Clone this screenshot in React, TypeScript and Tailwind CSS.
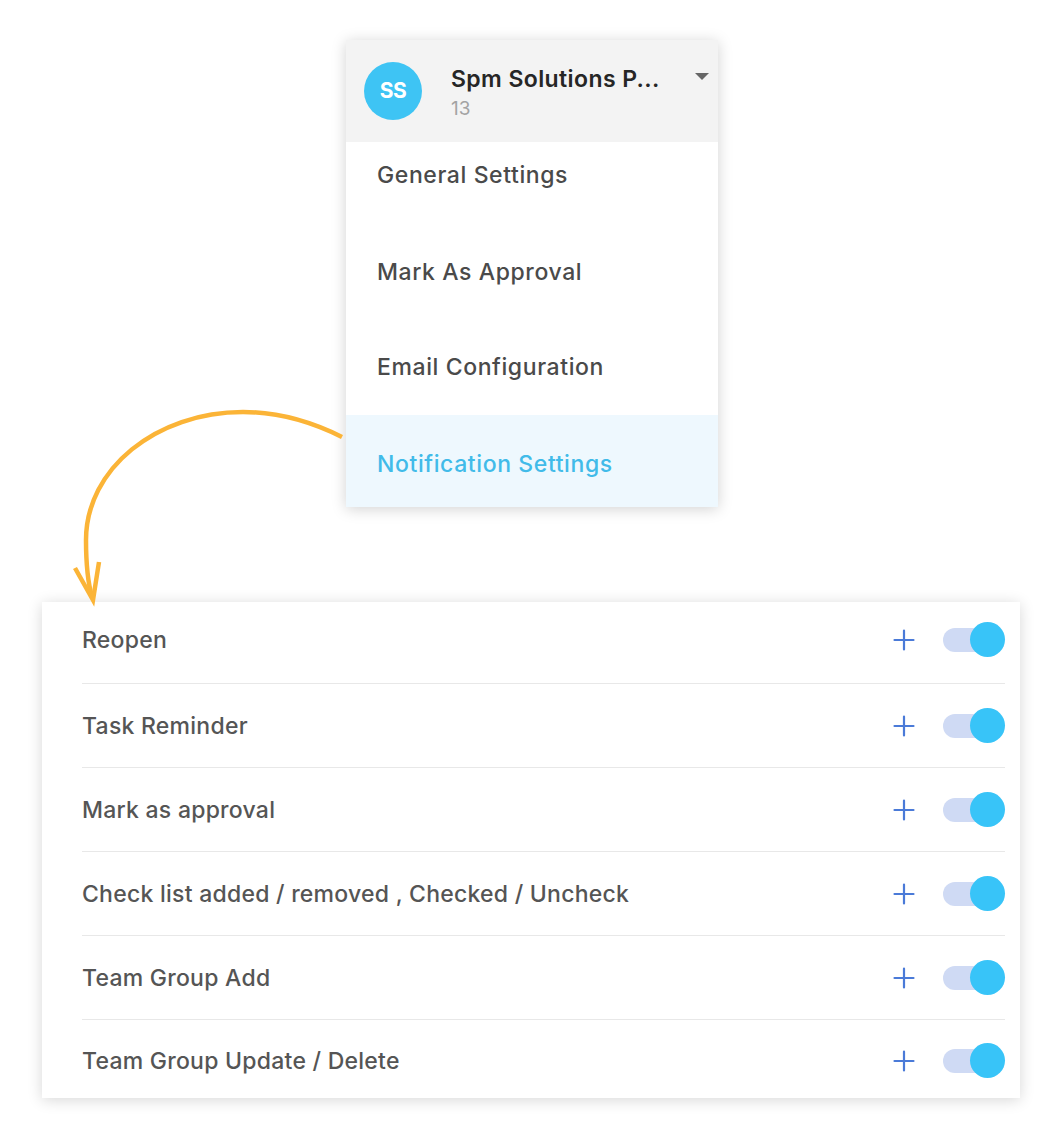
import React from "react";

const rows = [
  "Reopen",
  "Task Reminder",
  "Mark as approval",
  "Check list added / removed , Checked / Uncheck",
  "Team Group Add",
  "Team Group Update / Delete",
];

function PlusIcon() {
  return (
    <svg width="22" height="22" viewBox="0 0 22 22" fill="none">
      <path d="M11 1.5V20.5M1.5 11H20.5" stroke="#4a7ad8" strokeWidth="2.2" strokeLinecap="round" />
    </svg>
  );
}

function Toggle() {
  return (
    <div className="relative w-[62px] h-[36px] flex items-center">
      <div className="w-[48px] h-[24px] rounded-full bg-[#cfdaf4]" />
      <div className="absolute right-0 top-0 w-[35px] h-[35px] rounded-full bg-[#38c4f8]" />
    </div>
  );
}

export default function App() {
  return (
    <div
      className="relative w-[1060px] h-[1138px] bg-white overflow-hidden"
      style={{ fontFamily: "Inter, 'Noto Sans', sans-serif" }}
    >
      {/* Dropdown card */}
      <div className="ml-[346px] mt-[40px] w-[372px] bg-white shadow-[0_2px_14px_rgba(0,0,0,0.18)]">
        <div className="h-[102px] bg-[#f3f3f3] flex items-center pl-[18px] pr-[8px]">
          <div className="w-[58px] h-[58px] rounded-full bg-[#3ec4f4] flex items-center justify-center text-white text-[21px] font-bold tracking-tight">
            SS
          </div>
          <div className="ml-[29px] flex-1 flex flex-col mt-[4px]">
            <div className="text-[23px] font-semibold text-[#262626] leading-[28px] tracking-[0.4px]">
              Spm Solutions P...
            </div>
            <div className="text-[19px] text-[#a3a3a3] leading-[26px] mt-[3px]">13</div>
          </div>
          <svg width="16" height="9" viewBox="0 0 16 9" className="mb-[30px] mr-[0px]">
            <path d="M1 1H15L8 8Z" fill="#666" />
          </svg>
        </div>
        <div className="h-[81px] pt-[19px] pl-[31px] text-[23px] tracking-[0.6px] font-medium text-[#4a4a4a] leading-[28px]">
          General Settings
        </div>
        <div className="h-[96px] pt-[35px] pl-[31px] text-[23px] tracking-[0.6px] font-medium text-[#4a4a4a] leading-[28px]">
          Mark As Approval
        </div>
        <div className="h-[96px] pt-[34px] pl-[31px] text-[23px] tracking-[0.6px] font-medium text-[#4a4a4a] leading-[28px]">
          Email Configuration
        </div>
        <div className="h-[92px] pt-[35px] pl-[31px] text-[23px] tracking-[0.6px] font-medium text-[#41bbe9] leading-[28px] bg-[#eef8fe]">
          Notification Settings
        </div>
      </div>

      {/* Notification list card */}
      <div className="ml-[42px] mt-[95px] w-[978px] bg-white shadow-[0_2px_14px_rgba(0,0,0,0.16)] pl-[40px] pr-[15px]">
        {rows.map((r, i) => (
          <div
            key={r}
            className={
              "flex items-center " +
              (i === rows.length - 1
                ? "h-[78px] pt-[4px]"
                : i === 0
                ? "h-[82px] pb-[6px] border-b border-[#e8e8e8]"
                : "h-[84px] border-b border-[#e8e8e8]")
            }
          >
            <div className="flex-1 text-[23px] tracking-[0.25px] font-medium text-[#555555] leading-[28px]">{r}</div>
            <PlusIcon />
            <div className="ml-[28px]">
              <Toggle />
            </div>
          </div>
        ))}
      </div>

      {/* Arrow overlay */}
      <svg className="absolute left-0 top-0 pointer-events-none" width="1060" height="1138" viewBox="0 0 1060 1138">
        <path
          d="M342 437 C 310 421, 276 412, 243 412 C 156 412, 86 469, 86 540 C 86 565, 88 583, 92 597"
          fill="none"
          stroke="#fbb437"
          strokeWidth="4.5"
        />
        <path d="M75 568 L93 600 L99 562" fill="none" stroke="#fbb437" strokeWidth="4.5" />
      </svg>
    </div>
  );
}
